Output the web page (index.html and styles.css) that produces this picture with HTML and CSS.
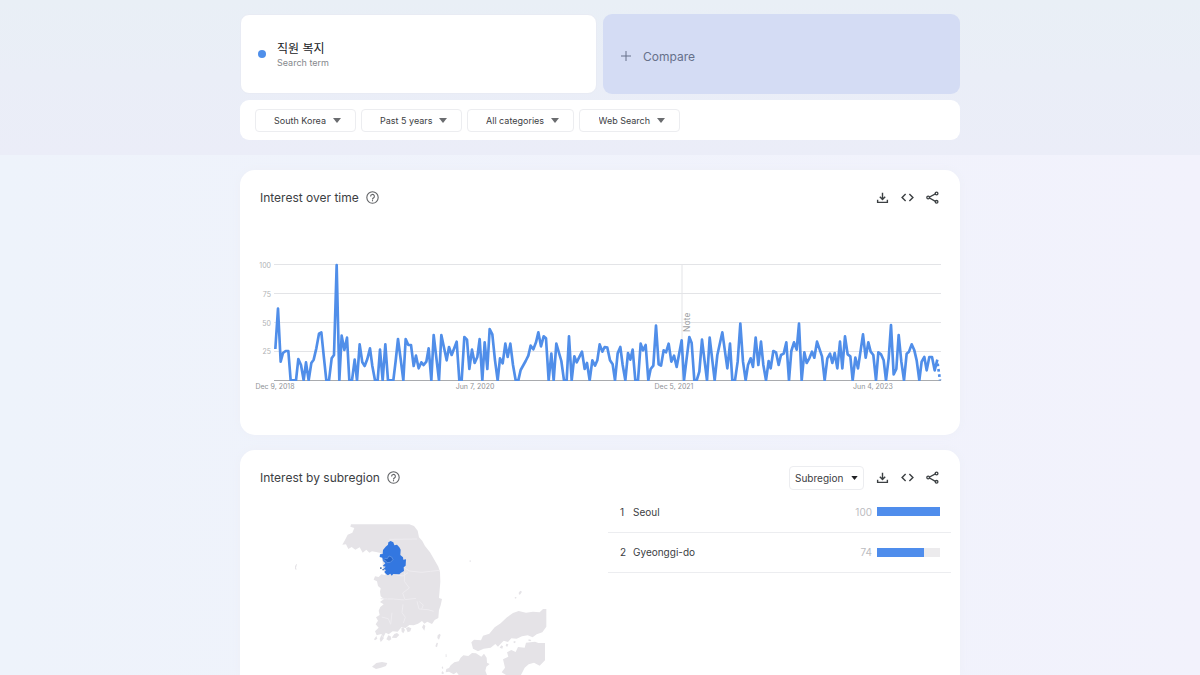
FILE: index.html
```
<!DOCTYPE html>
<html lang="en">
<head>
<meta charset="utf-8">
<meta name="viewport" content="width=device-width, initial-scale=1">
<title>직원 복지 - Explore</title>
<link rel="stylesheet" href="styles.css">
</head>
<body>
<svg class="symbols" aria-hidden="true">
  <symbol id="help" viewBox="0 0 24 24"><circle cx="12" cy="12" r="10.500" fill="none" stroke="currentColor" stroke-width="2"/><path d="M8.500 10a3.500 3.500 0 1 1 5.200 2.900C12.700 13.600 12 14 12 15.500" fill="none" stroke="currentColor" stroke-width="2"/><path d="M11 16.800h2v2.200h-2z" fill="currentColor"/></symbol>
  <symbol id="download" viewBox="0 0 24 24"><path d="M12 3v12M7 10.500l5 5 5-5M3 16v5h18v-5" fill="none" stroke="currentColor" stroke-width="2.600"/></symbol>
  <symbol id="embed" viewBox="0 0 24 24"><path d="M8.500 5.500L2 12l6.500 6.500M15.500 5.500L22 12l-6.500 6.500" fill="none" stroke="currentColor" stroke-width="2.600"/></symbol>
  <symbol id="share" viewBox="0 0 24 24"><path d="M19 4.500L5 12l14 8" fill="none" stroke="currentColor" stroke-width="2.400"/><g fill="#fff" stroke="currentColor" stroke-width="2.400"><circle cx="19.500" cy="4.500" r="2.500"/><circle cx="4" cy="12" r="2.500"/><circle cx="19.500" cy="20" r="2.500"/></g></symbol>
  <symbol id="caret" viewBox="0 0 8 5"><path d="M0 0h8L4 5z" fill="currentColor"/></symbol>
</svg>
<header class="hero">
  <div class="container">
    <div class="terms">
      <div class="term">
        <span class="dot"></span>
        <div>
          <h1 class="term-name" lang="ko">직원 복지</h1>
          <p class="term-type">Search term</p>
        </div>
      </div>
      <button class="compare" type="button">
        <svg class="plus" viewBox="0 0 10 10" aria-hidden="true"><path d="M5 0v10M0 5h10" stroke="currentColor" fill="none"/></svg>
        Compare
      </button>
    </div>
    <div class="filters">
      <label class="chip"><select aria-label="Location"><option>South Korea</option></select><svg class="caret"><use href="#caret"/></svg></label>
      <label class="chip"><select aria-label="Time range"><option>Past 5 years</option></select><svg class="caret"><use href="#caret"/></svg></label>
      <label class="chip"><select aria-label="Category"><option>All categories</option></select><svg class="caret"><use href="#caret"/></svg></label>
      <label class="chip"><select aria-label="Search type"><option>Web Search</option></select><svg class="caret"><use href="#caret"/></svg></label>
    </div>
  </div>
</header>
<main class="container cards">
  <section class="card">
    <div class="card-head">
      <h2>Interest over time</h2>
      <button class="icon help" type="button" aria-label="Help"><svg><use href="#help"/></svg></button>
      <div class="actions">
        <button class="icon" type="button" aria-label="Download"><svg><use href="#download"/></svg></button>
        <button class="icon" type="button" aria-label="Embed"><svg><use href="#embed"/></svg></button>
        <button class="icon" type="button" aria-label="Share"><svg><use href="#share"/></svg></button>
      </div>
    </div>
    <svg class="chart" viewBox="0 0 700 140" role="img" aria-label="Interest over time">
      <g class="grid"><path d="M24 9.500h667M24 38.500h667M24 67.500h667M24 96.500h667M432 9v117"/></g>
      <path class="axis" d="M24 125.500h667"/>
      <g class="scale"><text x="21" y="13">100</text><text x="21" y="42">75</text><text x="21" y="71">50</text><text x="21" y="99">25</text></g>
      <g class="dates"><text x="25" y="134">Dec 9, 2018</text><text x="225" y="134">Jun 7, 2020</text><text x="424" y="134">Dec 5, 2021</text><text x="623" y="134">Jun 4, 2023</text></g>
      <text class="note" transform="translate(440 77) rotate(-90)">Note</text>
      <svg width="700" height="126" viewBox="0 0 2100 378">
        <polyline class="series" points="76,282 84,161 92,320 99,294 107,288 115,288 122,376 138,376 145,312 153,330 161,376 168,322 176,376 184,324 191,314 199,280 207,236 214,232 222,310 229,376 237,376 245,310 252,300 260,30 268,376 275,242 283,285 291,248 298,376 306,376 314,314 321,376 329,268 337,322 344,333 352,312 360,280 367,333 375,376 383,376 390,284 398,376 406,268 414,376 430,376 437,318 444,252 452,312 460,376 467,252 475,270 483,270 491,333 498,302 506,340 514,322 521,330 529,320 536,280 544,376 551,240 567,376 574,240 590,316 597,276 605,300 620,260 628,376 635,376 643,246 651,254 658,342 666,284 674,324 682,306 689,252 697,376 704,262 712,342 719,222 727,238 735,316 743,376 750,310 758,325 766,266 773,306 781,266 789,330 797,376 805,376 812,345 827,318 835,302 842,272 850,283 858,262 865,232 873,274 881,244 888,250 896,376 904,296 911,376 919,266 934,318 942,376 950,376 957,244 965,376 973,304 980,322 996,290 1004,342 1011,324 1019,376 1027,316 1035,332 1042,316 1049,268 1057,290 1064,276 1072,278 1080,316 1088,328 1095,376 1103,295 1111,276 1118,330 1126,376 1134,294 1141,314 1148,284 1156,376 1164,376 1172,266 1179,286 1187,270 1195,376 1202,342 1210,332 1218,212 1226,328 1233,332 1241,286 1248,292 1256,266 1264,320 1272,302 1280,336 1295,256 1302,376 1310,310 1318,246 1325,264 1333,376 1340,376 1348,350 1356,254 1364,320 1371,376 1379,248 1394,376 1402,300 1417,232 1432,340 1440,266 1447,376 1455,376 1463,320 1471,206 1479,320 1487,376 1494,330 1502,310 1509,336 1517,248 1525,330 1533,260 1540,330 1548,376 1556,318 1562,340 1570,288 1578,292 1586,330 1593,300 1601,296 1609,262 1617,376 1624,288 1632,262 1640,284 1647,206 1655,376 1663,292 1670,324 1678,310 1686,290 1693,308 1701,260 1716,304 1724,376 1732,310 1740,296 1747,324 1754,294 1762,340 1770,260 1777,340 1785,244 1793,298 1801,304 1808,376 1816,308 1824,340 1839,238 1847,308 1855,262 1862,290 1870,300 1878,376 1885,292 1893,298 1901,316 1908,376 1916,310 1923,210 1931,358 1939,342 1946,240 1954,320 1962,376 1970,296 1977,290 1985,268 1993,286 2000,316 2008,376 2015,320 2023,306 2030,346 2038,306 2046,306 2054,346 2062,314"/>
        <path class="series partial" d="M2063 326L2070 376"/>
      </svg>
    </svg>
  </section>
  <section class="card last">
    <div class="card-head">
      <h2>Interest by subregion</h2>
      <button class="icon help" type="button" aria-label="Help"><svg><use href="#help"/></svg></button>
      <div class="actions">
        <label class="resolution"><select aria-label="Resolution"><option>Subregion</option></select><svg class="caret"><use href="#caret"/></svg></label>
        <button class="icon" type="button" aria-label="Download"><svg><use href="#download"/></svg></button>
        <button class="icon" type="button" aria-label="Embed"><svg><use href="#embed"/></svg></button>
        <button class="icon" type="button" aria-label="Share"><svg><use href="#share"/></svg></button>
      </div>
    </div>
    <div class="subregion">
      <svg class="map" viewBox="0 0 840 495" role="img" aria-label="Map of South Korea">
        <g fill="#e5e3e7">
          <path d="M213 43H388L402 48 413 62 417 82 427 93 435 108 450 127 463 149 475 170 480 187 481 215 479 240 477 264 486 267 482 286 477 300 475 324 464 330 456 342 442 335 433 341 426 333 414 341 401 346 388 345 377 354 364 352 353 365 338 364 326 373 317 368 310 382 304 372 290 376 285 364 296 353 287 343 294 332 288 322 299 315 296 302 301 291 311 283 300 276 312 267 302 259 300 245 302 235 294 228 291 214 281 209 285 199 296 201 304 193 317 196 309 175 307 145 302 129 288 126 276 124 268 128 259 119 248 128 239 112 226 119 215 111 205 117 198 103 187 104 195 90 203 74 217 68 223 54 211 50z"/>
          <path d="M276 470L289 459 306 456 322 459 318 468 303 473 288 477zM282 388l7-10 3 8-7 5zM299 387l5-12 8 9-6 8-4 4zM319 388l6-12 7 3 2 9-7 4zM335 383l8-11 8-3 7 6-9 9zM364 355l6-3 5 8-5 10-5-5zM378 355l7-4 9 4-3 9-8 3zM426 352l5-9 5 5-3 14zM473 376l6-5 3 4-5 14-5-5zM466 409l4-11 4 1-3 13zM497 433l2-2 1 9-3 2zM716 248l5-6 5 3-5 8-4 1zM704 262l4-1 2 3-5 2zM569 151h3v5h-3zM45 169l4-7 2 1-3 10 2 6-5-1z"/>
          <path d="M574 397L582 389 603 391 609 377 628 371 644 352 662 340 681 322 699 309 716 303 738 308 759 305 779 307 789 297H799V350L787 367 770 373 758 382 743 376 726 379 710 386 694 385 684 396 671 392 662 401 654 410 646 402 632 413 611 416 594 424 579 416z"/>
          <path d="M512 466L523 457 536 454 542 443 550 436 565 438 576 429 588 430 604 440 612 431 620 443 621 458 629 462 619 470 616 482 621 495H536L530 487 521 493 507 485 497 487 499 477 507 474zM485 472l3-3 2 6-3 2zM487 483l5 6-3 4-5-3zM669 448L685 440 681 427 694 420 707 426 714 411 734 413 738 398 765 395 775 399H795V451L779 467 762 458 746 463 734 473 723 495H678L665 487 675 473z"/>
          <path d="M659 413l5-7 5 3-2 7zM679 401l6 2-3 7-5-2zM702 393l6 2-4 5-4-3zM746 388l8 2-3 4-6-2z"/>
        </g>
        <path d="M328 88L411 87M378 153L374 174 389 183 426 187 451 184 479 181M349 195L369 198 384 188M374 187L373 214 388 234 368 249 375 269 408 265M302 266L323 267 341 267 373 270M369 283L366 308 376 322 370 339M305 321L325 326 332 343 336 308M411 274L417 297 444 299 461 304M418 275L430 285 425 297" fill="none" stroke="#eeecf0" stroke-width="3"/>
        <path d="M332 93L340 97 343 106 351 104 358 112 362 119 361 135 369 142 370 149 378 148 377 167 371 172 372 183 363 188 358 193 340 192 335 197 331 191 324 196 319 193 313 186 318 180 310 177 317 170 308 168 316 160 309 153 307 143 299 141 300 133 308 132 309 120 317 110 324 104 325 97z" fill="#3377e0"/>
        <path d="M315 145l7 1 5-8 8 3 4 8-8 8-10 1-4-6-7-1z" fill="#2463c7" stroke="#70a0e8" stroke-width="2"/>
        <path d="M300 172h5v5h-5zM307 177h5v4h-5z" fill="#587bae"/>
      </svg>
      <table class="ranking" aria-label="Interest by subregion">
        <tbody>
          <tr><td class="rank">1</td><td class="region">Seoul</td><td class="value">100</td><td class="bar-cell"><div class="bar"><div class="fill" style="width:100%"></div></div></td></tr>
          <tr><td class="rank">2</td><td class="region">Gyeonggi-do</td><td class="value">74</td><td class="bar-cell"><div class="bar"><div class="fill" style="width:74%"></div></div></td></tr>
        </tbody>
      </table>
    </div>
  </section>
</main>
</body>
</html>
```
FILE: styles.css
```
* { box-sizing: border-box; }
body {
  margin: 0;
  min-height: 100vh;
  display: flex;
  flex-direction: column;
  background: linear-gradient(90deg, #eef3fb, #f2f2fc);
  font-family: Inter, "Noto Sans CJK KR", sans-serif;
  font-size: 10px;
  color: #3c4043;
}
h1, h2, p { margin: 0; font-weight: 400; }
button, select { font: inherit; color: inherit; border: 0; background: none; padding: 0; }
select { appearance: none; }
.symbols { position: absolute; width: 0; height: 0; }
.container { width: 100%; max-width: 720px; margin: 0 auto; }
.hero { background: linear-gradient(#e9eff6, #ebedf8); padding: 14px 0 15px; }
.terms { display: grid; grid-template-columns: 1fr 1fr; gap: 6px; margin-bottom: 6px; }
.term, .compare { height: 80px; border-radius: 9px; display: flex; align-items: center; }
.term { background: #fff; padding: 0 17px; gap: 11px; border: 1px solid #e8ebf4; }
.dot { width: 8px; height: 8px; border-radius: 50%; background: #4f8fea; }
.term-name { font-family: "Noto Sans CJK KR", sans-serif; font-size: 12px; line-height: 16px; padding-top: 2px; color: #202124; }
.term-type { font-size: 9px; line-height: 14px; color: #85888c; }
.compare { background: #d4dcf4; color: #66708a; padding: 4px 18px 0; gap: 12px; font-size: 12px; }
.plus { width: 10px; height: 10px; }
.filters { display: flex; gap: 5px; height: 40px; align-items: center; background: #fff; border-radius: 9px; padding: 0 15px; }
.chip { display: flex; align-items: center; justify-content: center; gap: 6px; height: 23px; min-width: 101px; padding: 0 14px 0 18px; border: 1px solid #ecedf0; border-radius: 4px; font-size: 9px; }
.caret { width: 8px; height: 5px; color: #6a6c6f; pointer-events: none; }
.cards { flex: 1; display: flex; flex-direction: column; gap: 15px; padding-top: 15px; }
.card { background: #fff; border-radius: 15px; box-shadow: 0 0 8px #edeff7; }
.card:first-child { min-height: 265px; }
.last { flex: 1; border-radius: 15px 15px 0 0; }
.card-head { display: flex; align-items: center; height: 55px; padding: 0 21px 0 20px; }
h2 { font-size: 12px; }
.icon { display: flex; }
.icon svg { width: 13px; height: 13px; }
.help { margin-left: 7px; color: #606265; }
.actions { display: flex; align-items: center; gap: 12px; margin-left: auto; }
.resolution { display: flex; align-items: center; gap: 7px; height: 24px; padding: 0 5px; border: 1px solid #ecedf0; border-radius: 4px; }
.resolution .caret { width: 7px; height: 4px; color: #202124; }
.chart { display: block; margin: 30px 10px 0; }
.grid { stroke: #e3e4e7; fill: none; }
.axis { stroke: #a9abae; }
.scale, .dates { font-size: 7px; fill: #8f9296; }
.scale { text-anchor: end; fill: #b0b2b5; }
.dates { text-anchor: middle; }
.note { font-family: Roboto, sans-serif; font-size: 9px; fill: #a0a2a5; }
.series { fill: none; stroke: #508ee9; stroke-width: 8; stroke-linejoin: round; }
.partial { stroke-dasharray: 8 8; }
.subregion { display: grid; grid-template-columns: 1fr 343px; padding: 0 9px 0 40px; }
.map { width: 280px; height: 165px; margin-top: 5px; }
.ranking { width: 100%; height: 80px; border-collapse: collapse; margin-top: -13px; align-self: start; }
.ranking td { height: 40px; padding: 0; border-bottom: 1px solid #ecedf0; }
.ranking .rank { width: 25px; padding-left: 12px; }
.ranking .value { width: 30px; text-align: right; color: #bbbcbf; }
.ranking .bar-cell { width: 79px; padding: 0 11px 0 5px; }
.bar { height: 9px; background: #ecebed; }
.fill { height: 100%; background: #4f8dec; }
```
